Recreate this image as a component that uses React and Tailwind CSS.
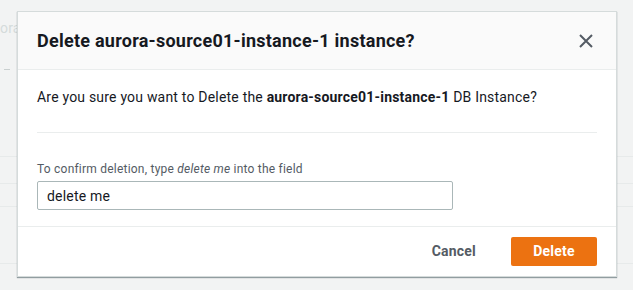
import { useState } from "react"

export default function App() {
  const [value, setValue] = useState("delete me")

  return (
    <div
      className="relative w-[633px] h-[290px] overflow-hidden bg-[#f2f3f3] tracking-[0.2px]"
      style={{ fontFamily: "Roboto, 'Liberation Sans', sans-serif" }}
    >
      {/* faint page behind the modal */}
      <div className="absolute inset-0 pointer-events-none">
        <div className="pt-[18px] text-[14px] text-[#d5dbdb]">ora</div>
        <div className="mt-[30px] ml-[4px] w-[6px] h-[1px] bg-[#c9cfcf]" />
        <div className="mt-[86px] h-[1px] bg-[#e7eaea]" />
        <div className="mt-[26px] h-[1px] bg-[#e7eaea]" />
        <div className="mt-[22px] h-[1px] bg-[#e7eaea]" />
        <div className="mt-[56px] h-[1px] bg-[#e7eaea]" />
      </div>

      <div className="relative pt-[11px] pl-[17px]">
        <div className="w-[600px] bg-white border border-[#d5dbdb] shadow-[0_1px_1px_0_rgba(0,28,36,0.4)]">
          {/* header */}
          <div className="h-[58px] flex items-center justify-between pl-[19px] pr-[20px] bg-[#fafafa] border-b border-[#eaeded]">
            <h2 className="text-[18px] font-bold text-[#16191f] tracking-[0.25px]">
              Delete aurora-source01-instance-1 instance?
            </h2>
            <button className="w-[20px] h-[20px] flex items-center justify-center text-[#545b64]">
              <svg width="14" height="14" viewBox="0 0 14 14" fill="none" stroke="currentColor" strokeWidth="2">
                <path d="M1 1l12 12M13 1L1 13" />
              </svg>
            </button>
          </div>

          {/* body */}
          <div className="px-[19px] pt-[16px]">
            <p className="text-[14px] leading-[22px] text-[#16191f]">
              Are you sure you want to Delete the <b className="font-bold">aurora-source01-instance-1</b> DB Instance?
            </p>
            <div className="mt-[24px] h-[1px] bg-[#eaeded]" />
            <label className="block mt-[28px] text-[12px] leading-[16px] text-[#545b64] tracking-[0.22px]">
              To confirm deletion, type <i>delete me</i> into the field
            </label>
            <input
              value={value}
              onChange={(e) => setValue(e.target.value)}
              className="mt-[4px] w-[416px] h-[29px] px-[9px] text-[14px] text-[#16191f] border border-[#aab7b8] rounded-[2px] outline-none"
            />
          </div>

          {/* footer */}
          <div className="mt-[16px] h-[50px] border-t border-[#eaeded] flex items-center justify-end pr-[19px]">
            <button className="text-[14px] font-bold text-[#545b64] mr-[35px]">Cancel</button>
            <button className="w-[86px] h-[29px] rounded-[2px] bg-[#ec7211] text-white text-[14px] font-bold">
              Delete
            </button>
          </div>
        </div>
      </div>
    </div>
  )
}
